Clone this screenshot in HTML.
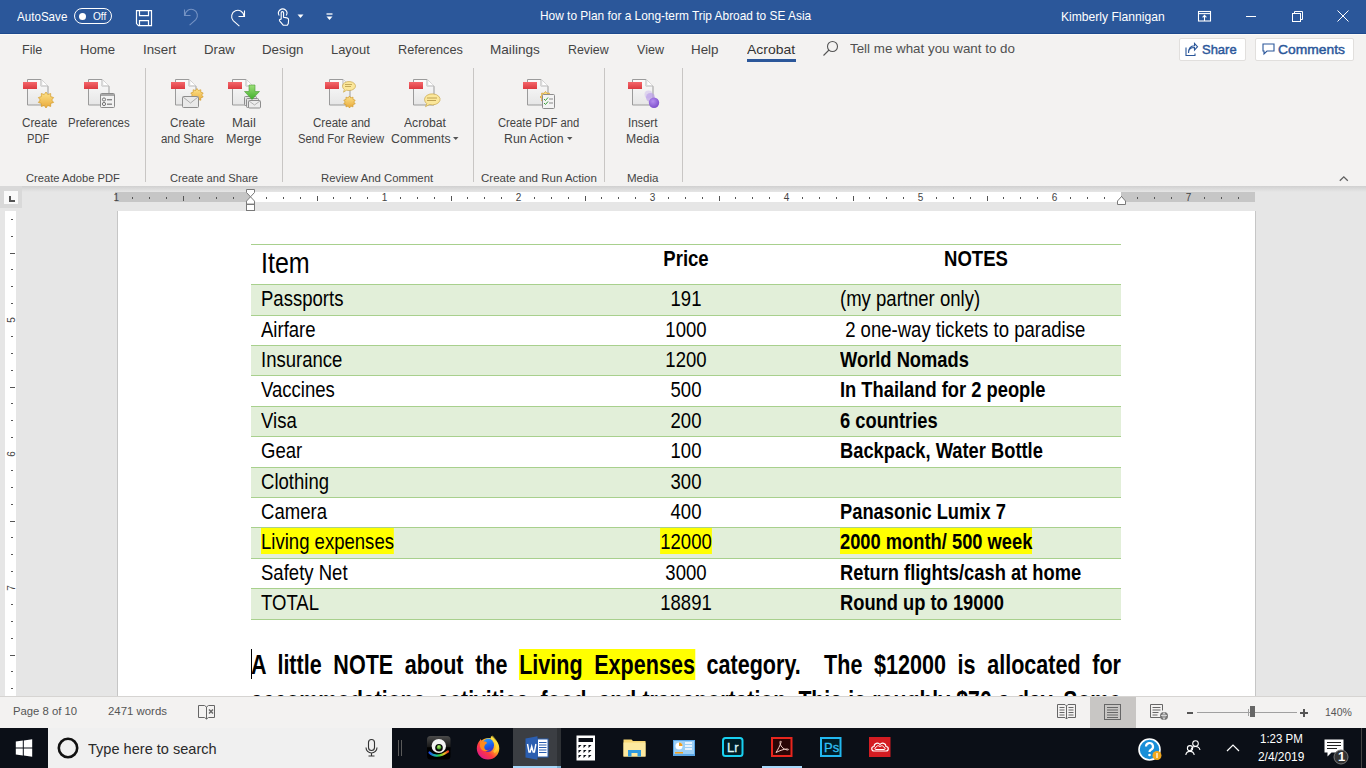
<!DOCTYPE html><html><head><meta charset="utf-8"><title>Word</title><style>*{margin:0;padding:0;box-sizing:border-box}
html,body{width:1366px;height:768px;overflow:hidden;background:#e6e6e6;font-family:"Liberation Sans",sans-serif;position:relative}
.a{position:absolute}
.tx{position:absolute;white-space:nowrap;transform-origin:0 0}
svg{position:absolute;overflow:visible}
</style></head><body>
<div class="a" style="left:0px;top:0px;width:1366px;height:34px;background:#2b579a;"></div>
<div class="a" style="left:0px;top:33px;width:1366px;height:1px;background:#1e4a8e;"></div>
<div class="tx" style="left:17.00px;top:10.00px;font-size:13px;line-height:13px;transform:scaleX(0.8929);color:#fff;">AutoSave</div>
<div class="a" style="left:74px;top:8px;width:38px;height:16px;border:1.3px solid #fff;border-radius:8px"></div>
<div class="a" style="left:78.5px;top:12.5px;width:7px;height:7px;border-radius:50%;background:#fff"></div>
<div class="tx" style="left:92.52px;top:11.11px;font-size:10.5px;line-height:10.5px;transform:scaleX(0.9630);color:#fff;">Off</div>
<svg style="left:135px;top:9px" width="18" height="18" viewBox="0 0 18 18" fill="none" stroke="#fff" stroke-width="1.2">
<path d="M1.5 1.6h15v15h-13l-2-2z"/><path d="M4.5 1.6v5h9v-5"/><path d="M4.5 16.6v-5h9v5"/></svg>
<svg style="left:182px;top:8px" width="18" height="18" viewBox="0 0 18 18" fill="none" stroke="#7593c4" stroke-width="1.1">
<path d="M2.5 1.5v6h6"/><path d="M3 7.2a6.2 6.2 0 1 1 10.8 4.5L7.6 17.2"/></svg>
<svg style="left:229px;top:9px" width="18" height="18" viewBox="0 0 18 18" fill="none" stroke="#fff" stroke-width="1.1">
<path d="M15.5 1.5v6h-6"/><path d="M15 7.2a6.2 6.2 0 1 0 -10.8 4.5L10.4 17.2"/></svg>
<svg style="left:276px;top:8px" width="16" height="18" viewBox="0 0 16 18" fill="none" stroke="#fff" stroke-width="1.1">
<path d="M3.2 7.5a4.2 4.2 0 1 1 7 0"/><path d="M5.2 11.5V4.8a1.2 1.2 0 0 1 2.4 0V9.3l3.4.6a2 2 0 0 1 1.6 2.1l-.3 3.6-1 1.6H7.2l-3.6-4.4a1 1 0 0 1 1.5-1.3l.1.1"/></svg>
<svg style="left:297px;top:14px" width="7" height="5" viewBox="0 0 7 5"><path d="M0.5 0.5h6l-3 3.5z" fill="#fff"/></svg>
<svg style="left:326px;top:13px" width="7" height="8" viewBox="0 0 7 8"><path d="M0.5 1h6" stroke="#fff" stroke-width="1.3"/><path d="M0.5 3.4h6l-3 3.6z" fill="#fff"/></svg>
<div class="tx" style="left:540.48px;top:9.30px;font-size:13px;line-height:13px;transform:scaleX(0.9152);color:#fff;">How to Plan for a Long-term Trip Abroad to SE Asia</div>
<div class="tx" style="left:1061.07px;top:9.50px;font-size:13px;line-height:13px;transform:scaleX(0.9315);color:#fff;">Kimberly Flannigan</div>
<svg style="left:1197px;top:10px" width="16" height="13" viewBox="0 0 16 13" fill="none" stroke="#fff" stroke-width="1.1">
<rect x="1.5" y="1.5" width="12" height="9.5"/><path d="M1.5 3.6h12"/><path d="M7.5 11v-5.6M5.6 7.3l1.9-1.9 1.9 1.9"/></svg>
<div class="a" style="left:1246px;top:16px;width:10px;height:1px;background:#fff;"></div>
<svg style="left:1291px;top:10px" width="13" height="13" viewBox="0 0 13 13" fill="none" stroke="#fff" stroke-width="1">
<rect x="1.5" y="3.5" width="8" height="8"/><path d="M3.5 3.5v-2h8v8h-2"/></svg>
<svg style="left:1337px;top:10px" width="12" height="12" viewBox="0 0 12 12" fill="none" stroke="#fff" stroke-width="1">
<path d="M0.5 0.5l11 11M11.5 0.5l-11 11"/></svg>
<div class="a" style="left:0px;top:34px;width:1366px;height:152px;background:#f3f2f1;"></div>
<div class="a" style="left:0px;top:34px;width:1366px;height:1px;background:#fbfaf8;"></div>
<div class="tx" style="left:21.93px;top:43.00px;font-size:13px;line-height:13px;transform:scaleX(0.9692);color:#444;">File</div>
<div class="tx" style="left:79.79px;top:43.00px;font-size:13px;line-height:13px;transform:scaleX(1.0135);color:#444;">Home</div>
<div class="tx" style="left:142.52px;top:43.00px;font-size:13px;line-height:13px;transform:scaleX(1.0240);color:#444;">Insert</div>
<div class="tx" style="left:203.98px;top:43.00px;font-size:13px;line-height:13px;transform:scaleX(1.0169);color:#444;">Draw</div>
<div class="tx" style="left:261.98px;top:43.00px;font-size:13px;line-height:13px;transform:scaleX(1.0245);color:#444;">Design</div>
<div class="tx" style="left:331.01px;top:43.00px;font-size:13px;line-height:13px;transform:scaleX(0.9921);color:#444;">Layout</div>
<div class="tx" style="left:398.02px;top:43.00px;font-size:13px;line-height:13px;transform:scaleX(0.9754);color:#444;">References</div>
<div class="tx" style="left:490.36px;top:43.00px;font-size:13px;line-height:13px;transform:scaleX(1.0443);color:#444;">Mailings</div>
<div class="tx" style="left:568.05px;top:43.00px;font-size:13px;line-height:13px;transform:scaleX(0.9533);color:#444;">Review</div>
<div class="tx" style="left:637.00px;top:43.00px;font-size:13px;line-height:13px;transform:scaleX(0.9643);color:#444;">View</div>
<div class="tx" style="left:690.97px;top:43.00px;font-size:13px;line-height:13px;transform:scaleX(1.0297);color:#444;">Help</div>
<div class="tx" style="left:747.00px;top:43.00px;font-size:13px;line-height:13px;transform:scaleX(1.0726);color:#333;">Acrobat</div>
<div class="a" style="left:747px;top:59px;width:49px;height:3px;background:#2b579a;"></div>
<svg style="left:822px;top:40px" width="17" height="17" viewBox="0 0 17 17" fill="none" stroke="#555" stroke-width="1.1">
<circle cx="10.5" cy="6.5" r="5"/><path d="M7 10L1.5 15.5"/></svg>
<div class="tx" style="left:850.24px;top:42.00px;font-size:13px;line-height:13px;transform:scaleX(1.0279);color:#505050;">Tell me what you want to do</div>
<div class="a" style="left:1178.5px;top:37.5px;width:67px;height:23px;background:#fff;border:1px solid #e1dfdd;border-radius:2px"></div>
<div class="a" style="left:1254.5px;top:37.5px;width:99px;height:23px;background:#fff;border:1px solid #e1dfdd;border-radius:2px"></div>
<svg style="left:1185px;top:43px" width="13" height="13" viewBox="0 0 13 13" fill="none" stroke="#2b579a" stroke-width="1.1">
<path d="M1 4.5v8h9v-2"/><path d="M3.5 10c0-4 2.5-5.5 6-5.5V7l3-3.3-3-3.2v2.3c-4 0-6 2.5-6 7.2z"/></svg>
<div class="tx" style="left:1201.58px;top:42.57px;font-size:13.5px;line-height:13.5px;transform:scaleX(0.9612);color:#2b579a;-webkit-text-stroke:0.45px #2b579a;">Share</div>
<svg style="left:1262px;top:43px" width="13" height="12" viewBox="0 0 13 12" fill="none" stroke="#2b579a" stroke-width="1.1">
<path d="M1 1h11v7H5l-3 3V8H1z"/></svg>
<div class="tx" style="left:1277.53px;top:42.57px;font-size:13.5px;line-height:13.5px;transform:scaleX(1.0250);color:#2b579a;-webkit-text-stroke:0.45px #2b579a;">Comments</div>
<div class="a" style="left:145px;top:68px;width:1px;height:114px;background:#c8c6c4;"></div>
<div class="a" style="left:282px;top:68px;width:1px;height:114px;background:#c8c6c4;"></div>
<div class="a" style="left:473px;top:68px;width:1px;height:114px;background:#c8c6c4;"></div>
<div class="a" style="left:604px;top:68px;width:1px;height:114px;background:#c8c6c4;"></div>
<div class="a" style="left:682px;top:68px;width:1px;height:114px;background:#c8c6c4;"></div>
<svg style="left:22px;top:75px" width="32" height="32" viewBox="0 0 32 32">
<defs><linearGradient id="sg27" x1="0" y1="0" x2="0" y2="1"><stop offset="0" stop-color="#fbfbfb"/><stop offset="1" stop-color="#e6e6e6"/></linearGradient>
<linearGradient id="rg27" x1="0" y1="0" x2="0" y2="1"><stop offset="0" stop-color="#f4676b"/><stop offset="1" stop-color="#dc3a40"/></linearGradient></defs>
<path d="M5.5 4.5h13.5l7 7v18.5h-20.5z" fill="url(#sg27)" stroke="#9b9b9b" stroke-width="1"/>
<path d="M19 4.5v6.5h7" fill="#fff" stroke="#b5b5b5" stroke-width="1"/>
<path d="M19.5 5.5v5.5h5.5" fill="none" stroke="#d8d8d8" stroke-width="1.5"/>
<rect x="1" y="7" width="14" height="7" fill="url(#rg27)"/></svg>
<svg style="left:0;top:0" width="1366" height="200"><defs><linearGradient id="gold" x1="0" y1="0" x2="0" y2="1"><stop offset="0" stop-color="#fde38a"/><stop offset="1" stop-color="#e9a93a"/></linearGradient></defs><polygon points="46.00,92.00 47.78,94.52 50.70,93.53 50.66,96.61 53.61,97.53 51.76,100.00 53.61,102.47 50.66,103.39 50.70,106.47 47.78,105.48 46.00,108.00 44.22,105.48 41.30,106.47 41.34,103.39 38.39,102.47 40.24,100.00 38.39,97.53 41.34,96.61 41.30,93.53 44.22,94.52" fill="url(#gold)" stroke="#d29b2a" stroke-width="0.7"/></svg>
<svg style="left:83px;top:75px" width="32" height="32" viewBox="0 0 32 32">
<defs><linearGradient id="sg88" x1="0" y1="0" x2="0" y2="1"><stop offset="0" stop-color="#fbfbfb"/><stop offset="1" stop-color="#e6e6e6"/></linearGradient>
<linearGradient id="rg88" x1="0" y1="0" x2="0" y2="1"><stop offset="0" stop-color="#f4676b"/><stop offset="1" stop-color="#dc3a40"/></linearGradient></defs>
<path d="M5.5 4.5h13.5l7 7v18.5h-20.5z" fill="url(#sg88)" stroke="#9b9b9b" stroke-width="1"/>
<path d="M19 4.5v6.5h7" fill="#fff" stroke="#b5b5b5" stroke-width="1"/>
<path d="M19.5 5.5v5.5h5.5" fill="none" stroke="#d8d8d8" stroke-width="1.5"/>
<rect x="1" y="7" width="14" height="7" fill="url(#rg88)"/></svg>
<svg style="left:0;top:0" width="1366" height="200">
<rect x="100.5" y="93.5" width="14" height="14" rx="1" fill="#f2f2f2" stroke="#8a8a8a"/><rect x="101" y="94" width="13" height="2" fill="#a8a8a8"/>
<circle cx="104" cy="99.5" r="1.6" fill="none" stroke="#555" stroke-width="0.8"/><circle cx="104" cy="104" r="1.6" fill="none" stroke="#555" stroke-width="0.8"/>
<rect x="107" y="99" width="5" height="1.4" fill="#888"/><rect x="107" y="103.5" width="5" height="1.4" fill="#888"/></svg>
<svg style="left:170px;top:75px" width="32" height="32" viewBox="0 0 32 32">
<defs><linearGradient id="sg175" x1="0" y1="0" x2="0" y2="1"><stop offset="0" stop-color="#fbfbfb"/><stop offset="1" stop-color="#e6e6e6"/></linearGradient>
<linearGradient id="rg175" x1="0" y1="0" x2="0" y2="1"><stop offset="0" stop-color="#f4676b"/><stop offset="1" stop-color="#dc3a40"/></linearGradient></defs>
<path d="M5.5 4.5h13.5l7 7v18.5h-20.5z" fill="url(#sg175)" stroke="#9b9b9b" stroke-width="1"/>
<path d="M19 4.5v6.5h7" fill="#fff" stroke="#b5b5b5" stroke-width="1"/>
<path d="M19.5 5.5v5.5h5.5" fill="none" stroke="#d8d8d8" stroke-width="1.5"/>
<rect x="1" y="7" width="14" height="7" fill="url(#rg175)"/></svg>
<svg style="left:0;top:0" width="1366" height="200"><polygon points="197.00,88.50 198.45,90.55 200.82,89.74 200.79,92.25 203.18,92.99 201.68,95.00 203.18,97.01 200.79,97.75 200.82,100.26 198.45,99.45 197.00,101.50 195.55,99.45 193.18,100.26 193.21,97.75 190.82,97.01 192.32,95.00 190.82,92.99 193.21,92.25 193.18,89.74 195.55,90.55" fill="url(#gold)" stroke="#d29b2a" stroke-width="0.7"/>
<rect x="182.5" y="96.5" width="16" height="11" rx="1" fill="#e9e9e9" stroke="#8d8d8d"/><path d="M183 97l7.5 6 7.5-6" fill="none" stroke="#9a9a9a" stroke-width="0.8"/></svg>
<svg style="left:227px;top:75px" width="32" height="32" viewBox="0 0 32 32">
<defs><linearGradient id="sg232" x1="0" y1="0" x2="0" y2="1"><stop offset="0" stop-color="#fbfbfb"/><stop offset="1" stop-color="#e6e6e6"/></linearGradient>
<linearGradient id="rg232" x1="0" y1="0" x2="0" y2="1"><stop offset="0" stop-color="#f4676b"/><stop offset="1" stop-color="#dc3a40"/></linearGradient></defs>
<path d="M5.5 4.5h13.5l7 7v18.5h-20.5z" fill="url(#sg232)" stroke="#9b9b9b" stroke-width="1"/>
<path d="M19 4.5v6.5h7" fill="#fff" stroke="#b5b5b5" stroke-width="1"/>
<path d="M19.5 5.5v5.5h5.5" fill="none" stroke="#d8d8d8" stroke-width="1.5"/>
<rect x="1" y="7" width="14" height="7" fill="url(#rg232)"/></svg>
<svg style="left:0;top:0" width="1366" height="200">
<defs><linearGradient id="grn" x1="0" y1="0" x2="0" y2="1"><stop offset="0" stop-color="#9ee07a"/><stop offset="1" stop-color="#3fae2a"/></linearGradient></defs>
<rect x="244.5" y="96.5" width="12" height="9" rx="1" fill="#e3e3e3" stroke="#8d8d8d"/>
<rect x="246.5" y="98.5" width="12" height="9" rx="1" fill="#e3e3e3" stroke="#8d8d8d"/>
<rect x="248.5" y="100.5" width="12" height="7.5" rx="1" fill="#ececec" stroke="#8d8d8d"/><path d="M249 101l5.5 4 5.5-4" fill="none" stroke="#9a9a9a" stroke-width="0.7"/>
<path d="M249 85h6v6.5h4.5l-7.5 8-7.5-8h4.5z" fill="url(#grn)" stroke="#4a9b35" stroke-width="0.6"/></svg>
<svg style="left:324px;top:75px" width="32" height="32" viewBox="0 0 32 32">
<defs><linearGradient id="sg329" x1="0" y1="0" x2="0" y2="1"><stop offset="0" stop-color="#fbfbfb"/><stop offset="1" stop-color="#e6e6e6"/></linearGradient>
<linearGradient id="rg329" x1="0" y1="0" x2="0" y2="1"><stop offset="0" stop-color="#f4676b"/><stop offset="1" stop-color="#dc3a40"/></linearGradient></defs>
<path d="M5.5 4.5h13.5l7 7v18.5h-20.5z" fill="url(#sg329)" stroke="#9b9b9b" stroke-width="1"/>
<path d="M19 4.5v6.5h7" fill="#fff" stroke="#b5b5b5" stroke-width="1"/>
<path d="M19.5 5.5v5.5h5.5" fill="none" stroke="#d8d8d8" stroke-width="1.5"/>
<rect x="1" y="7" width="14" height="7" fill="url(#rg329)"/></svg>
<svg style="left:0;top:0" width="1366" height="200"><polygon points="349.50,96.00 350.83,97.89 353.03,97.15 352.99,99.46 355.21,100.15 353.82,102.00 355.21,103.85 352.99,104.54 353.03,106.85 350.83,106.11 349.50,108.00 348.17,106.11 345.97,106.85 346.01,104.54 343.79,103.85 345.18,102.00 343.79,100.15 346.01,99.46 345.97,97.15 348.17,97.89" fill="url(#gold)" stroke="#d29b2a" stroke-width="0.7"/>
<path d="M342.5 86a6.5 4.5 0 1 1 4 4.2l-3 2 .8-2.6a4.5 4.5 0 0 1 -1.8-3.6z" fill="#fbe79a" stroke="#c9a64a" stroke-width="0.7"/>
<path d="M345 84.5h7M345 86.5h6" stroke="#b89a4a" stroke-width="0.8"/></svg>
<svg style="left:408px;top:75px" width="32" height="32" viewBox="0 0 32 32">
<defs><linearGradient id="sg413" x1="0" y1="0" x2="0" y2="1"><stop offset="0" stop-color="#fbfbfb"/><stop offset="1" stop-color="#e6e6e6"/></linearGradient>
<linearGradient id="rg413" x1="0" y1="0" x2="0" y2="1"><stop offset="0" stop-color="#f4676b"/><stop offset="1" stop-color="#dc3a40"/></linearGradient></defs>
<path d="M5.5 4.5h13.5l7 7v18.5h-20.5z" fill="url(#sg413)" stroke="#9b9b9b" stroke-width="1"/>
<path d="M19 4.5v6.5h7" fill="#fff" stroke="#b5b5b5" stroke-width="1"/>
<path d="M19.5 5.5v5.5h5.5" fill="none" stroke="#d8d8d8" stroke-width="1.5"/>
<rect x="1" y="7" width="14" height="7" fill="url(#rg413)"/></svg>
<svg style="left:0;top:0" width="1366" height="200">
<path d="M424.5 99.5a7.8 5.5 0 1 1 5 5l-4 2.2 1.3-3a5.5 5.5 0 0 1 -2.3-4.2z" fill="#fbe79a" stroke="#c9a64a" stroke-width="0.7"/>
<path d="M427 98h10M427 100.5h9" stroke="#b89a4a" stroke-width="0.9"/></svg>
<svg style="left:522px;top:75px" width="32" height="32" viewBox="0 0 32 32">
<defs><linearGradient id="sg527" x1="0" y1="0" x2="0" y2="1"><stop offset="0" stop-color="#fbfbfb"/><stop offset="1" stop-color="#e6e6e6"/></linearGradient>
<linearGradient id="rg527" x1="0" y1="0" x2="0" y2="1"><stop offset="0" stop-color="#f4676b"/><stop offset="1" stop-color="#dc3a40"/></linearGradient></defs>
<path d="M5.5 4.5h13.5l7 7v18.5h-20.5z" fill="url(#sg527)" stroke="#9b9b9b" stroke-width="1"/>
<path d="M19 4.5v6.5h7" fill="#fff" stroke="#b5b5b5" stroke-width="1"/>
<path d="M19.5 5.5v5.5h5.5" fill="none" stroke="#d8d8d8" stroke-width="1.5"/>
<rect x="1" y="7" width="14" height="7" fill="url(#rg527)"/></svg>
<svg style="left:0;top:0" width="1366" height="200"><polygon points="545.50,91.50 547.02,93.34 549.39,93.11 549.16,95.48 551.00,97.00 549.16,98.52 549.39,100.89 547.02,100.66 545.50,102.50 543.98,100.66 541.61,100.89 541.84,98.52 540.00,97.00 541.84,95.48 541.61,93.11 543.98,93.34" fill="url(#gold)" stroke="#d29b2a" stroke-width="0.7"/>
<rect x="542.5" y="94.5" width="12" height="14" rx="1" fill="#f4f4f4" stroke="#8d8d8d"/>
<path d="M544 99l1.5 1.5 2.5-3M544 103l1.5 1.5 2.5-3" fill="none" stroke="#3aa13a" stroke-width="1"/>
<path d="M549 99h4M549 103h4" stroke="#8a8a8a" stroke-width="1.2"/></svg>
<svg style="left:627px;top:75px" width="32" height="32" viewBox="0 0 32 32">
<defs><linearGradient id="sg632" x1="0" y1="0" x2="0" y2="1"><stop offset="0" stop-color="#fbfbfb"/><stop offset="1" stop-color="#e6e6e6"/></linearGradient>
<linearGradient id="rg632" x1="0" y1="0" x2="0" y2="1"><stop offset="0" stop-color="#f4676b"/><stop offset="1" stop-color="#dc3a40"/></linearGradient></defs>
<path d="M5.5 4.5h13.5l7 7v18.5h-20.5z" fill="url(#sg632)" stroke="#9b9b9b" stroke-width="1"/>
<path d="M19 4.5v6.5h7" fill="#fff" stroke="#b5b5b5" stroke-width="1"/>
<path d="M19.5 5.5v5.5h5.5" fill="none" stroke="#d8d8d8" stroke-width="1.5"/>
<rect x="1" y="7" width="14" height="7" fill="url(#rg632)"/></svg>
<svg style="left:0;top:0" width="1366" height="200">
<defs><radialGradient id="pur" cx="0.4" cy="0.35" r="0.7"><stop offset="0" stop-color="#b58ef0"/><stop offset="1" stop-color="#7a4cc9"/></radialGradient></defs>
<circle cx="648.5" cy="94.5" r="4" fill="#c7b3ea" opacity="0.45"/><circle cx="650.5" cy="97.5" r="4.5" fill="#b797ea" opacity="0.6"/>
<circle cx="654" cy="102.8" r="5.2" fill="url(#pur)"/></svg>
<div class="tx" style="left:21.51px;top:117.04px;font-size:12px;line-height:12px;transform:scaleX(0.9771);color:#444;">Create</div>
<div class="tx" style="left:27.07px;top:133.04px;font-size:12px;line-height:12px;transform:scaleX(0.9319);color:#444;">PDF</div>
<div class="tx" style="left:68.45px;top:117.04px;font-size:12px;line-height:12px;transform:scaleX(0.9534);color:#444;">Preferences</div>
<div class="tx" style="left:169.51px;top:117.04px;font-size:12px;line-height:12px;transform:scaleX(0.9714);color:#444;">Create</div>
<div class="tx" style="left:160.52px;top:133.04px;font-size:12px;line-height:12px;transform:scaleX(0.9541);color:#444;">and Share</div>
<div class="tx" style="left:231.71px;top:117.04px;font-size:12px;line-height:12px;transform:scaleX(1.0864);color:#444;">Mail</div>
<div class="tx" style="left:225.95px;top:133.04px;font-size:12px;line-height:12px;transform:scaleX(1.0462);color:#444;">Merge</div>
<div class="tx" style="left:312.92px;top:117.04px;font-size:12px;line-height:12px;transform:scaleX(0.9648);color:#444;">Create and</div>
<div class="tx" style="left:297.53px;top:133.04px;font-size:12px;line-height:12px;transform:scaleX(0.9362);color:#444;">Send For Review</div>
<div class="tx" style="left:404.00px;top:117.04px;font-size:12px;line-height:12px;transform:scaleX(1.0133);color:#444;">Acrobat</div>
<div class="tx" style="left:390.99px;top:133.04px;font-size:12px;line-height:12px;transform:scaleX(1.0263);color:#444;">Comments</div>
<div class="tx" style="left:498.03px;top:117.04px;font-size:12px;line-height:12px;transform:scaleX(0.9357);color:#444;">Create PDF and</div>
<div class="tx" style="left:504.37px;top:133.04px;font-size:12px;line-height:12px;transform:scaleX(1.0265);color:#444;">Run Action</div>
<div class="tx" style="left:628.41px;top:117.04px;font-size:12px;line-height:12px;transform:scaleX(0.9862);color:#444;">Insert</div>
<div class="tx" style="left:626.29px;top:133.04px;font-size:12px;line-height:12px;transform:scaleX(1.0142);color:#444;">Media</div>
<svg style="left:453px;top:137px" width="6" height="4"><path d="M0 0h5.5l-2.75 3z" fill="#555"/></svg>
<svg style="left:567px;top:137px" width="6" height="4"><path d="M0 0h5.5l-2.75 3z" fill="#555"/></svg>
<div class="tx" style="left:25.91px;top:173.27px;font-size:11.5px;line-height:11.5px;transform:scaleX(0.9717);color:#444;">Create Adobe PDF</div>
<div class="tx" style="left:169.91px;top:173.27px;font-size:11.5px;line-height:11.5px;transform:scaleX(0.9700);color:#444;">Create and Share</div>
<div class="tx" style="left:321.41px;top:173.27px;font-size:11.5px;line-height:11.5px;transform:scaleX(0.9854);color:#444;">Review And Comment</div>
<div class="tx" style="left:481.10px;top:173.27px;font-size:11.5px;line-height:11.5px;transform:scaleX(1.0017);color:#444;">Create and Run Action</div>
<div class="tx" style="left:626.80px;top:173.27px;font-size:11.5px;line-height:11.5px;transform:scaleX(1.0033);color:#444;">Media</div>
<svg style="left:1339px;top:175px" width="10" height="7" viewBox="0 0 10 7"><path d="M0.8 5.8l4-4 4 4" fill="none" stroke="#606060" stroke-width="1.3"/></svg>
<div class="a" style="left:0;top:186px;width:1366px;height:6px;background:linear-gradient(#d0d0d0,#e6e6e6)"></div>
<div class="a" style="left:0px;top:186px;width:22px;height:22px;background:#d9d9d9;"></div>
<div class="a" style="left:4px;top:191px;width:14px;height:13px;background:#fafafa;"></div>
<svg style="left:9px;top:196px" width="7" height="7"><path d="M0 0h2v4h4v2H0z" fill="#555"/></svg>
<div class="a" style="left:115px;top:192px;width:136px;height:10px;background:#c6c6c6;"></div>
<div class="a" style="left:251px;top:192px;width:870px;height:10px;background:#ffffff;"></div>
<div class="a" style="left:1121px;top:192px;width:134px;height:10px;background:#c6c6c6;"></div>
<svg style="left:0;top:0" width="1366" height="220"><rect x="132" y="197" width="1" height="2" fill="#555"/><rect x="149" y="197" width="1" height="2" fill="#555"/><rect x="166" y="197" width="1" height="2" fill="#555"/><rect x="183" y="196" width="1" height="5" fill="#555"/><rect x="199" y="197" width="1" height="2" fill="#555"/><rect x="216" y="197" width="1" height="2" fill="#555"/><rect x="233" y="197" width="1" height="2" fill="#555"/><rect x="266" y="197" width="1" height="2" fill="#555"/><rect x="283" y="197" width="1" height="2" fill="#555"/><rect x="300" y="197" width="1" height="2" fill="#555"/><rect x="317" y="196" width="1" height="5" fill="#555"/><rect x="333" y="197" width="1" height="2" fill="#555"/><rect x="350" y="197" width="1" height="2" fill="#555"/><rect x="367" y="197" width="1" height="2" fill="#555"/><rect x="400" y="197" width="1" height="2" fill="#555"/><rect x="417" y="197" width="1" height="2" fill="#555"/><rect x="434" y="197" width="1" height="2" fill="#555"/><rect x="451" y="196" width="1" height="5" fill="#555"/><rect x="467" y="197" width="1" height="2" fill="#555"/><rect x="484" y="197" width="1" height="2" fill="#555"/><rect x="501" y="197" width="1" height="2" fill="#555"/><rect x="534" y="197" width="1" height="2" fill="#555"/><rect x="551" y="197" width="1" height="2" fill="#555"/><rect x="568" y="197" width="1" height="2" fill="#555"/><rect x="585" y="196" width="1" height="5" fill="#555"/><rect x="601" y="197" width="1" height="2" fill="#555"/><rect x="618" y="197" width="1" height="2" fill="#555"/><rect x="635" y="197" width="1" height="2" fill="#555"/><rect x="668" y="197" width="1" height="2" fill="#555"/><rect x="685" y="197" width="1" height="2" fill="#555"/><rect x="702" y="197" width="1" height="2" fill="#555"/><rect x="719" y="196" width="1" height="5" fill="#555"/><rect x="735" y="197" width="1" height="2" fill="#555"/><rect x="752" y="197" width="1" height="2" fill="#555"/><rect x="769" y="197" width="1" height="2" fill="#555"/><rect x="802" y="197" width="1" height="2" fill="#555"/><rect x="819" y="197" width="1" height="2" fill="#555"/><rect x="836" y="197" width="1" height="2" fill="#555"/><rect x="853" y="196" width="1" height="5" fill="#555"/><rect x="869" y="197" width="1" height="2" fill="#555"/><rect x="886" y="197" width="1" height="2" fill="#555"/><rect x="903" y="197" width="1" height="2" fill="#555"/><rect x="936" y="197" width="1" height="2" fill="#555"/><rect x="953" y="197" width="1" height="2" fill="#555"/><rect x="970" y="197" width="1" height="2" fill="#555"/><rect x="987" y="196" width="1" height="5" fill="#555"/><rect x="1003" y="197" width="1" height="2" fill="#555"/><rect x="1020" y="197" width="1" height="2" fill="#555"/><rect x="1037" y="197" width="1" height="2" fill="#555"/><rect x="1070" y="197" width="1" height="2" fill="#555"/><rect x="1087" y="197" width="1" height="2" fill="#555"/><rect x="1104" y="197" width="1" height="2" fill="#555"/><rect x="1121" y="196" width="1" height="5" fill="#555"/><rect x="1137" y="197" width="1" height="2" fill="#555"/><rect x="1154" y="197" width="1" height="2" fill="#555"/><rect x="1171" y="197" width="1" height="2" fill="#555"/><rect x="1204" y="197" width="1" height="2" fill="#555"/><rect x="1221" y="197" width="1" height="2" fill="#555"/><rect x="1238" y="197" width="1" height="2" fill="#555"/></svg>
<div class="tx" style="left:113.62px;top:192.53px;font-size:10px;line-height:10px;color:#444">1</div>
<div class="tx" style="left:381.73px;top:192.53px;font-size:10px;line-height:10px;color:#444">1</div>
<div class="tx" style="left:515.85px;top:192.53px;font-size:10px;line-height:10px;color:#444">2</div>
<div class="tx" style="left:649.73px;top:192.53px;font-size:10px;line-height:10px;color:#444">3</div>
<div class="tx" style="left:783.85px;top:192.53px;font-size:10px;line-height:10px;color:#444">4</div>
<div class="tx" style="left:917.73px;top:192.53px;font-size:10px;line-height:10px;color:#444">5</div>
<div class="tx" style="left:1051.72px;top:192.53px;font-size:10px;line-height:10px;color:#444">6</div>
<div class="tx" style="left:1185.85px;top:192.53px;font-size:10px;line-height:10px;color:#444">7</div>
<svg style="left:0;top:0" width="1366" height="220">
<path d="M246.5 189.5h8v3l-4 4.3-4-4.3z" fill="#fff" stroke="#7a7a7a"/>
<path d="M250.5 196.8l4 4.3v3h-8v-3z" fill="#fff" stroke="#7a7a7a"/>
<rect x="246.5" y="204.5" width="8" height="6" fill="#fff" stroke="#7a7a7a"/>
<path d="M1121.5 196.5l4 4.5v3.5h-8v-3.5z" fill="#fff" stroke="#7a7a7a"/></svg>
<div class="a" style="left:5px;top:211px;width:11px;height:485px;background:#ffffff;"></div>
<svg style="left:0;top:0" width="30" height="700"><rect x="11" y="219" width="2" height="1" fill="#555"/><rect x="11" y="236" width="2" height="1" fill="#555"/><rect x="10" y="253" width="5" height="1" fill="#555"/><rect x="11" y="269" width="2" height="1" fill="#555"/><rect x="11" y="286" width="2" height="1" fill="#555"/><rect x="11" y="303" width="2" height="1" fill="#555"/><rect x="11" y="336" width="2" height="1" fill="#555"/><rect x="11" y="353" width="2" height="1" fill="#555"/><rect x="11" y="370" width="2" height="1" fill="#555"/><rect x="10" y="387" width="5" height="1" fill="#555"/><rect x="11" y="403" width="2" height="1" fill="#555"/><rect x="11" y="420" width="2" height="1" fill="#555"/><rect x="11" y="437" width="2" height="1" fill="#555"/><rect x="11" y="470" width="2" height="1" fill="#555"/><rect x="11" y="487" width="2" height="1" fill="#555"/><rect x="11" y="504" width="2" height="1" fill="#555"/><rect x="10" y="521" width="5" height="1" fill="#555"/><rect x="11" y="537" width="2" height="1" fill="#555"/><rect x="11" y="554" width="2" height="1" fill="#555"/><rect x="11" y="571" width="2" height="1" fill="#555"/><rect x="11" y="604" width="2" height="1" fill="#555"/><rect x="11" y="621" width="2" height="1" fill="#555"/><rect x="11" y="638" width="2" height="1" fill="#555"/><rect x="10" y="655" width="5" height="1" fill="#555"/><rect x="11" y="671" width="2" height="1" fill="#555"/><rect x="11" y="688" width="2" height="1" fill="#555"/></svg>
<div class="tx" style="left:6px;top:314px;width:12px;height:12px;font-size:10px;line-height:12px;color:#444;text-align:center;transform:rotate(-90deg);transform-origin:6px 6px">5</div>
<div class="tx" style="left:6px;top:448px;width:12px;height:12px;font-size:10px;line-height:12px;color:#444;text-align:center;transform:rotate(-90deg);transform-origin:6px 6px">6</div>
<div class="tx" style="left:6px;top:582px;width:12px;height:12px;font-size:10px;line-height:12px;color:#444;text-align:center;transform:rotate(-90deg);transform-origin:6px 6px">7</div>
<div class="a" style="left:118px;top:211px;width:1137px;height:485px;background:#ffffff;"></div>
<div class="a" style="left:117px;top:211px;width:1px;height:485px;background:#c6c6c6;"></div>
<div class="a" style="left:1255px;top:211px;width:1px;height:485px;background:#c6c6c6;"></div>
<div class="a" style="left:251px;top:284px;width:870px;height:31px;background:#e2efd9;"></div>
<div class="a" style="left:251px;top:345px;width:870px;height:30px;background:#e2efd9;"></div>
<div class="a" style="left:251px;top:406px;width:870px;height:30px;background:#e2efd9;"></div>
<div class="a" style="left:251px;top:467px;width:870px;height:30px;background:#e2efd9;"></div>
<div class="a" style="left:251px;top:527px;width:870px;height:31px;background:#e2efd9;"></div>
<div class="a" style="left:251px;top:588px;width:870px;height:31px;background:#e2efd9;"></div>
<div class="a" style="left:251px;top:244px;width:870px;height:1px;background:#a8d08d;"></div>
<div class="a" style="left:251px;top:284px;width:870px;height:1px;background:#a8d08d;"></div>
<div class="a" style="left:251px;top:315px;width:870px;height:1px;background:#a8d08d;"></div>
<div class="a" style="left:251px;top:345px;width:870px;height:1px;background:#a8d08d;"></div>
<div class="a" style="left:251px;top:375px;width:870px;height:1px;background:#a8d08d;"></div>
<div class="a" style="left:251px;top:406px;width:870px;height:1px;background:#a8d08d;"></div>
<div class="a" style="left:251px;top:436px;width:870px;height:1px;background:#a8d08d;"></div>
<div class="a" style="left:251px;top:467px;width:870px;height:1px;background:#a8d08d;"></div>
<div class="a" style="left:251px;top:497px;width:870px;height:1px;background:#a8d08d;"></div>
<div class="a" style="left:251px;top:527px;width:870px;height:1px;background:#a8d08d;"></div>
<div class="a" style="left:251px;top:558px;width:870px;height:1px;background:#a8d08d;"></div>
<div class="a" style="left:251px;top:588px;width:870px;height:1px;background:#a8d08d;"></div>
<div class="a" style="left:251px;top:619px;width:870px;height:1px;background:#a8d08d;"></div>
<div class="tx" style="top:287.32px;font-size:22.9px;line-height:22.9px;transform:scaleX(0.81);left:260.5px;">Passports</div>
<div class="tx" style="top:287.32px;font-size:22.9px;line-height:22.9px;transform:scaleX(0.81);left:536px;width:300px;text-align:center;transform-origin:150px 0;">191</div>
<div class="tx" style="top:287.32px;font-size:22.9px;line-height:22.9px;transform:scaleX(0.81);left:840.2px;">(my partner only)</div>
<div class="tx" style="top:318.32px;font-size:22.9px;line-height:22.9px;transform:scaleX(0.81);left:260.5px;">Airfare</div>
<div class="tx" style="top:318.32px;font-size:22.9px;line-height:22.9px;transform:scaleX(0.81);left:536px;width:300px;text-align:center;transform-origin:150px 0;">1000</div>
<div class="tx" style="top:318.32px;font-size:22.9px;line-height:22.9px;transform:scaleX(0.81);left:840.2px;">&nbsp;2 one-way tickets to paradise</div>
<div class="tx" style="top:348.32px;font-size:22.9px;line-height:22.9px;transform:scaleX(0.81);left:260.5px;">Insurance</div>
<div class="tx" style="top:348.32px;font-size:22.9px;line-height:22.9px;transform:scaleX(0.81);left:536px;width:300px;text-align:center;transform-origin:150px 0;">1200</div>
<div class="tx" style="top:348.32px;font-size:22.9px;line-height:22.9px;transform:scaleX(0.8);font-weight:bold;left:840.2px;">World Nomads</div>
<div class="tx" style="top:378.32px;font-size:22.9px;line-height:22.9px;transform:scaleX(0.81);left:260.5px;">Vaccines</div>
<div class="tx" style="top:378.32px;font-size:22.9px;line-height:22.9px;transform:scaleX(0.81);left:536px;width:300px;text-align:center;transform-origin:150px 0;">500</div>
<div class="tx" style="top:378.32px;font-size:22.9px;line-height:22.9px;transform:scaleX(0.8);font-weight:bold;left:840.2px;">In Thailand for 2 people</div>
<div class="tx" style="top:409.32px;font-size:22.9px;line-height:22.9px;transform:scaleX(0.81);left:260.5px;">Visa</div>
<div class="tx" style="top:409.32px;font-size:22.9px;line-height:22.9px;transform:scaleX(0.81);left:536px;width:300px;text-align:center;transform-origin:150px 0;">200</div>
<div class="tx" style="top:409.32px;font-size:22.9px;line-height:22.9px;transform:scaleX(0.8);font-weight:bold;left:840.2px;">6 countries</div>
<div class="tx" style="top:439.32px;font-size:22.9px;line-height:22.9px;transform:scaleX(0.81);left:260.5px;">Gear</div>
<div class="tx" style="top:439.32px;font-size:22.9px;line-height:22.9px;transform:scaleX(0.81);left:536px;width:300px;text-align:center;transform-origin:150px 0;">100</div>
<div class="tx" style="top:439.32px;font-size:22.9px;line-height:22.9px;transform:scaleX(0.8);font-weight:bold;left:840.2px;">Backpack, Water Bottle</div>
<div class="tx" style="top:470.32px;font-size:22.9px;line-height:22.9px;transform:scaleX(0.81);left:260.5px;">Clothing</div>
<div class="tx" style="top:470.32px;font-size:22.9px;line-height:22.9px;transform:scaleX(0.81);left:536px;width:300px;text-align:center;transform-origin:150px 0;">300</div>
<div class="tx" style="top:500.32px;font-size:22.9px;line-height:22.9px;transform:scaleX(0.81);left:260.5px;">Camera</div>
<div class="tx" style="top:500.32px;font-size:22.9px;line-height:22.9px;transform:scaleX(0.81);left:536px;width:300px;text-align:center;transform-origin:150px 0;">400</div>
<div class="tx" style="top:500.32px;font-size:22.9px;line-height:22.9px;transform:scaleX(0.8);font-weight:bold;left:840.2px;">Panasonic Lumix 7</div>
<div class="tx" style="top:530.32px;font-size:22.9px;line-height:22.9px;transform:scaleX(0.81);left:260.5px;"><span style="background:#ffff00;padding:0">Living expenses</span></div>
<div class="tx" style="top:530.32px;font-size:22.9px;line-height:22.9px;transform:scaleX(0.81);left:536px;width:300px;text-align:center;transform-origin:150px 0;"><span style="background:#ffff00;padding:0">12000</span></div>
<div class="tx" style="top:530.32px;font-size:22.9px;line-height:22.9px;transform:scaleX(0.8);font-weight:bold;left:840.2px;"><span style="background:#ffff00;padding:0">2000 month/ 500 week</span></div>
<div class="tx" style="top:561.32px;font-size:22.9px;line-height:22.9px;transform:scaleX(0.81);left:260.5px;">Safety Net</div>
<div class="tx" style="top:561.32px;font-size:22.9px;line-height:22.9px;transform:scaleX(0.81);left:536px;width:300px;text-align:center;transform-origin:150px 0;">3000</div>
<div class="tx" style="top:561.32px;font-size:22.9px;line-height:22.9px;transform:scaleX(0.8);font-weight:bold;left:840.2px;">Return flights/cash at home</div>
<div class="tx" style="top:591.32px;font-size:22.9px;line-height:22.9px;transform:scaleX(0.81);left:260.5px;">TOTAL</div>
<div class="tx" style="top:591.32px;font-size:22.9px;line-height:22.9px;transform:scaleX(0.81);left:536px;width:300px;text-align:center;transform-origin:150px 0;">18891</div>
<div class="tx" style="top:591.32px;font-size:22.9px;line-height:22.9px;transform:scaleX(0.8);font-weight:bold;left:840.2px;">Round up to 19000</div>
<div class="tx" style="top:247.91px;font-size:30px;line-height:30px;transform:scaleX(0.835);left:260.5px;">Item</div>
<div class="tx" style="top:247.22px;font-size:22.9px;line-height:22.9px;transform:scaleX(0.81);font-weight:bold;left:536.3px;width:300px;text-align:center;transform-origin:150px 0;">Price</div>
<div class="tx" style="top:246.92px;font-size:22.9px;line-height:22.9px;transform:scaleX(0.81);font-weight:bold;left:826.2px;width:300px;text-align:center;transform-origin:150px 0;">NOTES</div>
<div class="a" style="left:251px;top:649px;width:1px;height:30px;background:#000;"></div>
<div class="tx" style="left:251px;top:648.8px;width:1129.87px;font-size:28px;line-height:31px;font-weight:bold;text-align:justify;text-align-last:justify;transform:scaleX(0.77)">A little NOTE about the <span style="background:#ffff00;padding:0">Living Expenses</span> category.&nbsp; The $12000 is allocated for</div>
<div class="a" style="left:118px;top:686px;width:1137px;height:10px;overflow:hidden"><div class="tx" style="left:133px;top:-0.8px;width:1149.27px;font-size:28px;line-height:31px;font-weight:bold;text-align:justify;text-align-last:justify;transform:scaleX(0.757)">accommodations, activities, food, and transportation. This is roughly $70 a day. Some</div></div>
<div class="a" style="left:0px;top:696px;width:1366px;height:32px;background:#f3f2f1;"></div>
<div class="a" style="left:0px;top:696px;width:1366px;height:1px;background:#d6d4d2;"></div>
<div class="tx" style="left:13.42px;top:706.27px;font-size:11.5px;line-height:11.5px;transform:scaleX(0.9820);color:#555;">Page 8 of 10</div>
<div class="tx" style="left:107.50px;top:706.27px;font-size:11.5px;line-height:11.5px;transform:scaleX(0.9915);color:#555;">2471 words</div>
<svg style="left:198px;top:704px" width="18" height="16" viewBox="0 0 18 16" fill="none" stroke="#666" stroke-width="1">
<path d="M0.5 1.5h6l2 1.5v12l-2-1.5h-6z"/><path d="M8.5 3l2-1.5h6v12h-6l-2 1.5"/><path d="M11 5.5l4 4M15 5.5l-4 4" stroke-width="1.4"/></svg>
<div class="a" style="left:1090px;top:697px;width:46px;height:31px;background:#c8c6c4;"></div>
<svg style="left:1057px;top:703px" width="20" height="17" viewBox="0 0 20 17" fill="none" stroke="#666" stroke-width="1">
<path d="M0.5 1.5h7.5l1.5 1.5 1.5-1.5h7.5v13h-7.5l-1.5 1.5-1.5-1.5h-7.5z"/><path d="M9.5 3v13"/>
<path d="M2.5 4.5h5M2.5 7h5M2.5 9.5h5M2.5 12h5M11.5 4.5h5M11.5 7h5M11.5 9.5h5M11.5 12h5"/></svg>
<svg style="left:1104px;top:704px" width="18" height="16" viewBox="0 0 18 16" fill="none" stroke="#666" stroke-width="1">
<rect x="0.5" y="0.5" width="16" height="15"/><path d="M3 3.5h11M3 6h11M3 8.5h11M3 11h11M3 13.5h11"/></svg>
<svg style="left:1150px;top:704px" width="20" height="17" viewBox="0 0 20 17" fill="none" stroke="#666" stroke-width="1">
<path d="M11 13.5H0.5v-13h12v6"/><path d="M2.5 3.5h8M2.5 6h8M2.5 8.5h6M2.5 11h5"/>
<circle cx="14" cy="12" r="4" fill="#777" stroke="none"/><path d="M11 11.5h6M14 8.5c-1.5 2-1.5 4 0 7M14 8.5c1.5 2 1.5 4 0 7" stroke="#eee" stroke-width="0.7"/></svg>
<div class="a" style="left:1187px;top:712px;width:6px;height:2px;background:#555;"></div>
<div class="a" style="left:1197px;top:712px;width:100px;height:1px;background:#a0a0a0;"></div>
<div class="a" style="left:1248px;top:709px;width:1px;height:7px;background:#a0a0a0;"></div>
<div class="a" style="left:1250px;top:706px;width:5px;height:11px;background:#666;"></div>
<div class="a" style="left:1300px;top:712px;width:8px;height:2px;background:#555;"></div>
<div class="a" style="left:1303px;top:709px;width:2px;height:8px;background:#555;"></div>
<div class="tx" style="left:1325.02px;top:706.67px;font-size:11.5px;line-height:11.5px;transform:scaleX(0.9133);color:#555;">140%</div>
<div class="a" style="left:0px;top:728px;width:1366px;height:40px;background:#0b0f17;"></div>
<svg style="left:15px;top:739px" width="18" height="18" viewBox="0 0 18 18" fill="#fff">
<path d="M0.8 2.6l7-1v7H0.8zM8.8 1.4l8.4-1.2V8.6H8.8zM0.8 9.6h7v7l-7-1zM8.8 9.6h8.4v8.2l-8.4-1.2z"/></svg>
<div class="a" style="left:48px;top:728px;width:344px;height:40px;background:#f0f0f0;"></div>
<svg style="left:56px;top:736px" width="24" height="24"><circle cx="12" cy="12" r="9.2" fill="none" stroke="#111" stroke-width="2.6"/></svg>
<div class="tx" style="left:88.25px;top:741.53px;font-size:14.5px;line-height:14.5px;transform:scaleX(1.0039);color:#2a2a2a;">Type here to search</div>
<svg style="left:365px;top:739px" width="13" height="18" viewBox="0 0 13 18" fill="none" stroke="#333" stroke-width="1.1">
<rect x="3.5" y="0.5" width="6" height="11" rx="3"/><path d="M1 8.5a5.5 5.5 0 0 0 11 0M6.5 14v3M3.5 17h6"/></svg>
<div class="a" style="left:398px;top:740px;width:1px;height:16px;background:#5a5a5a;"></div>
<div class="a" style="left:401px;top:740px;width:1px;height:16px;background:#5a5a5a;"></div>
<svg style="left:422px;top:732px" width="32" height="32" viewBox="0 0 32 32">
<defs><linearGradient id="wcb" x1="0" y1="0" x2="0" y2="1"><stop offset="0" stop-color="#4a4a4a"/><stop offset="0.45" stop-color="#1a1a1a"/><stop offset="0.5" stop-color="#000"/><stop offset="1" stop-color="#000"/></linearGradient>
<linearGradient id="rb" x1="0" y1="0" x2="1" y2="0"><stop offset="0" stop-color="#1e50e6"/><stop offset="0.35" stop-color="#19c0a0"/><stop offset="0.55" stop-color="#3fd03a"/><stop offset="0.8" stop-color="#f0c020"/><stop offset="1" stop-color="#e83a20"/></linearGradient>
<radialGradient id="grl" cx="0.45" cy="0.35" r="0.6"><stop offset="0" stop-color="#b8f070"/><stop offset="1" stop-color="#3a9a20"/></radialGradient></defs>
<rect x="5" y="4" width="23.5" height="23.5" rx="3.5" fill="url(#wcb)"/>
<ellipse cx="16.8" cy="14" rx="7.2" ry="7" fill="#f2f2f2"/>
<circle cx="17" cy="15.7" r="3.8" fill="#080808"/><circle cx="17" cy="15.2" r="2.2" fill="url(#grl)"/>
<path d="M7.5 20.5c3 3.5 10 5 18.5-1" fill="none" stroke="url(#rb)" stroke-width="2.2" stroke-linecap="round"/></svg>
<svg style="left:472px;top:732px" width="32" height="32" viewBox="0 0 32 32">
<defs><linearGradient id="ffo" x1="0.85" y1="0.1" x2="0.15" y2="0.9"><stop offset="0" stop-color="#fff44f"/><stop offset="0.35" stop-color="#ffb020"/><stop offset="0.65" stop-color="#ff3c3c"/><stop offset="1" stop-color="#e0188a"/></linearGradient>
<linearGradient id="ffb" x1="0.3" y1="0" x2="0.6" y2="1"><stop offset="0" stop-color="#2a9cff"/><stop offset="0.6" stop-color="#1a5ae8"/><stop offset="1" stop-color="#4a2ab8"/></linearGradient></defs>
<path d="M19.5 4.2c1.5 1.2 2.8 2.5 3.5 3.5 2.8 2.2 4.3 5.5 4.3 8.8 0 6.2-5 11-11.3 11S4.8 22.7 4.8 16.5c0-3.2 1.2-6 3.2-8.2l.3-1.3 1.2 1.5c2.5-2.2 5.8-3 9-2.3z" fill="url(#ffo)"/>
<ellipse cx="16.2" cy="13.3" rx="5.8" ry="6.8" fill="url(#ffb)"/>
<path d="M8.5 9c2 .5 3.5 .8 5 .5l1.8 1.6-1.5 1c-1 1-1.7 2.2-1.5 3.7.4 2.2 2.5 2.8 4.5 2.3 1.3-.3 2-1 1.2-.5-1.5 1-3.5 2-6 1.5-2.5-.7-4-3-4.2-5.5z" fill="#ff8a1c"/>
<path d="M19.5 4.2c2 2.3 4.5 4.5 5.5 8 .8 3-.5 6-3 8" fill="none" stroke="#ffe040" stroke-width="2.5" opacity="0.6"/></svg>
<div class="a" style="left:513px;top:728px;width:44px;height:40px;background:#3b3e43;"></div>
<div class="a" style="left:557px;top:728px;width:4px;height:40px;background:#2e3135;"></div>
<div class="a" style="left:513px;top:766px;width:44px;height:2px;background:#a6d8fb;"></div>
<div class="a" style="left:557px;top:766px;width:4px;height:2px;background:#7fb0d0;"></div>
<svg style="left:525px;top:736px" width="24" height="24" viewBox="0 0 24 24">
<path d="M0.5 2.5l12-2.2v23.4l-12-2.2z" fill="#2b5eb0"/><rect x="12.5" y="3" width="10.5" height="18" fill="#fff" stroke="#2b5eb0"/>
<path d="M14 6.5h7.5M14 9h7.5M14 11.5h7.5M14 14h7.5M14 16.5h7.5" stroke="#2b5eb0" stroke-width="1"/>
<path d="M2.5 8l1.5 8h1.2l1.5-5.5 1.5 5.5h1.2l1.5-8" fill="none" stroke="#fff" stroke-width="1.4"/></svg>
<svg style="left:576px;top:735px" width="20" height="26" viewBox="0 0 20 26">
<rect x="0.5" y="0.5" width="18.5" height="25" fill="#fff"/><rect x="2.5" y="3" width="14.5" height="4" fill="#0b0f17"/>
<g fill="#0b0f17"><path d="M2.5 10h3l-3 3zM7.5 10h3l-3 3zM12.5 10h3l-3 3zM2.5 15h3l-3 3zM7.5 15h3l-3 3zM12.5 15h3l-3 3zM2.5 20h3l-3 3zM7.5 20h3l-3 3zM12.5 20h3l-3 3z"/></g></svg>
<svg style="left:623px;top:738px" width="23" height="19" viewBox="0 0 23 19">
<path d="M0.5 1.5h8l1.5 1.5h12.5v15.5H0.5z" fill="#f8d775"/><rect x="0.5" y="4.5" width="22" height="14" fill="#fde9a0"/>
<path d="M5 18.5v-6.5h13v6.5h-3.5v-3.5h-6v3.5z" fill="#2f9ae0"/></svg>
<svg style="left:673px;top:740px" width="22" height="16" viewBox="0 0 22 16">
<rect x="0" y="0" width="22" height="16" fill="#5aa6e6"/><rect x="1" y="1" width="20" height="13" fill="#9ccff5"/>
<circle cx="6" cy="6" r="3.5" fill="#fff"/><path d="M6 6V2.5A3.5 3.5 0 0 1 9.5 6z" fill="#f0a020"/>
<path d="M12 3h7M12 6h7M12 9h7" stroke="#fff" stroke-width="1.3"/><rect x="2" y="12" width="8" height="1.5" fill="#f0a020"/></svg>
<svg style="left:722px;top:737px" width="22" height="20" viewBox="0 0 22 20">
<rect x="1" y="1" width="19.5" height="18" rx="2.5" fill="#001d26" stroke="#19d0f0" stroke-width="2"/></svg>
<div class="tx" style="left:727px;top:741px;font-size:13px;line-height:13px;color:#d8f6fb;-webkit-text-stroke:0.3px #d8f6fb">Lr</div>
<svg style="left:771px;top:737px" width="22" height="20" viewBox="0 0 22 20">
<rect x="1" y="1" width="19.5" height="18" fill="#2a0505" stroke="#e8261e" stroke-width="2"/>
<path d="M5 15.5c2-3 4-7 5-10 .5-2-1-2-1 0 0 3 3 7 7.5 7.5 1.5 0 1.5-1-.5-1-3 0-7 1.5-11 3.5" fill="none" stroke="#f4d0c8" stroke-width="1"/></svg>
<div class="a" style="left:762px;top:766px;width:40px;height:2px;background:#a6d8fb;"></div>
<svg style="left:820px;top:737px" width="22" height="20" viewBox="0 0 22 20">
<rect x="1" y="1" width="19.5" height="18" fill="#001d26" stroke="#22b8f0" stroke-width="2"/></svg>
<div class="tx" style="left:824px;top:741px;font-size:13px;line-height:13px;color:#31c0f5;-webkit-text-stroke:0.3px #31c0f5">Ps</div>
<svg style="left:869px;top:737px" width="22" height="20" viewBox="0 0 22 20">
<rect x="0" y="0" width="21.5" height="20" fill="#d41c22"/>
<path d="M5 14c-3 0-3-4.5 0-4.5 0-3 4-4.5 6-2 2-2.5 6-1 6 2 3 0 3 4.5 0 4.5z" fill="none" stroke="#fff" stroke-width="1.2"/>
<path d="M7 12.5c-1.5 0-1.5-2 0-2 .2-1.5 2.5-2.5 4-1 1.5-1.5 3.8-.5 4 1 1.5 0 1.5 2 0 2z" fill="none" stroke="#fff" stroke-width="1"/></svg>
<svg style="left:1138px;top:738px" width="26" height="23" viewBox="0 0 26 23">
<circle cx="11.5" cy="11.5" r="10.5" fill="#1a8fd8" stroke="#fff" stroke-width="1.6"/>
<path d="M8 8.5a3.5 3.5 0 1 1 5 3.2c-1 .5-1.5 1-1.5 2.3" fill="none" stroke="#fff" stroke-width="2.2"/><circle cx="11.5" cy="17" r="1.3" fill="#fff"/>
<circle cx="19" cy="17.5" r="4.5" fill="#f2a81d"/><rect x="18.4" y="15" width="1.2" height="5" fill="#fff"/></svg>
<svg style="left:1185px;top:740px" width="16" height="16" viewBox="0 0 16 16" fill="none" stroke="#fff" stroke-width="1.1">
<circle cx="10.5" cy="3.5" r="2.8"/><path d="M6 10c.5-2.5 2.5-3.5 4.5-3.5s4 1.2 4.5 3.5"/><circle cx="5" cy="8.2" r="2.6"/><path d="M0.8 15c.4-2.5 2.2-3.6 4.2-3.6s3.8 1.1 4.2 3.6"/></svg>
<svg style="left:1226px;top:743px" width="14" height="9" viewBox="0 0 14 9"><path d="M1 8l6-6 6 6" fill="none" stroke="#fff" stroke-width="1.2"/></svg>
<div class="tx" style="left:1259.54px;top:732.64px;font-size:12px;line-height:12px;transform:scaleX(0.9591);color:#fff;">1:23 PM</div>
<div class="tx" style="left:1257.80px;top:750.84px;font-size:12px;line-height:12px;transform:scaleX(0.9923);color:#fff;">2/4/2019</div>
<svg style="left:1324px;top:739px" width="26" height="26" viewBox="0 0 26 26">
<path d="M0.5 0.5h19v13h-12l-4 4v-4h-3z" fill="#fff"/><path d="M3 3.5h14M3 6.5h14M3 9.5h10" stroke="#222" stroke-width="1"/>
<circle cx="17" cy="18" r="7" fill="#333" stroke="#777" stroke-width="1"/></svg>
<div class="tx" style="left:1338px;top:750px;font-size:13px;line-height:13px;color:#fff;font-weight:bold">1</div>
<div class="a" style="left:1361px;top:728px;width:1px;height:40px;background:#444;"></div>
</body></html>
